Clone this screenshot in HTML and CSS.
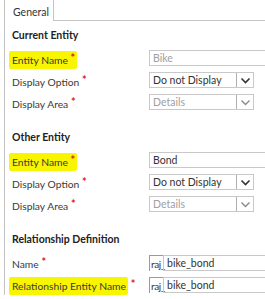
FILE: index.html
```html
<!DOCTYPE html>
<html>
<head>
<meta charset="utf-8">
<link rel="stylesheet" href="styles.css">
</head>
<body>
<div class="tabs">
  <div class="tab">General</div>
  <div class="tab-rest"></div>
</div>
<div class="panel">
  <div class="section-title">Current Entity</div>
  <div class="row first">
    <div class="label"><span class="hl">Entity Name <span class="req">*</span></span></div>
    <div class="field"><div class="input disabled wide">Bike</div></div>
  </div>
  <div class="row">
    <div class="label">Display Option <span class="req">*</span></div>
    <div class="field"><div class="select"><span class="val">Do not Display</span><span class="arrow"><svg width="11" height="7" viewBox="0 0 11 7"><path d="M1.5 1.5 L5.5 5.5 L9.5 1.5" fill="none" stroke="#333" stroke-width="1.6"/></svg></span></div></div>
  </div>
  <div class="row">
    <div class="label">Display Area <span class="req">*</span></div>
    <div class="field"><div class="select disabled"><span class="val">Details</span><span class="arrow"><svg width="11" height="7" viewBox="0 0 11 7"><path d="M1.5 1.5 L5.5 5.5 L9.5 1.5" fill="none" stroke="#8a8a8a" stroke-width="1.4"/></svg></span></div></div>
  </div>

  <div class="section-title second">Other Entity</div>
  <div class="row first">
    <div class="label"><span class="hl">Entity Name <span class="req">*</span></span></div>
    <div class="field"><div class="input wide">Bond</div></div>
  </div>
  <div class="row">
    <div class="label">Display Option <span class="req">*</span></div>
    <div class="field"><div class="select"><span class="val">Do not Display</span><span class="arrow"><svg width="11" height="7" viewBox="0 0 11 7"><path d="M1.5 1.5 L5.5 5.5 L9.5 1.5" fill="none" stroke="#333" stroke-width="1.6"/></svg></span></div></div>
  </div>
  <div class="row">
    <div class="label">Display Area <span class="req">*</span></div>
    <div class="field"><div class="select disabled"><span class="val">Details</span><span class="arrow"><svg width="11" height="7" viewBox="0 0 11 7"><path d="M1.5 1.5 L5.5 5.5 L9.5 1.5" fill="none" stroke="#8a8a8a" stroke-width="1.4"/></svg></span></div></div>
  </div>

  <div class="section-title second">Relationship Definition</div>
  <div class="row first">
    <div class="label">Name <span class="req">*</span></div>
    <div class="field prefixed"><span class="prefix">raj_</span><div class="input wide">bike_bond</div></div>
  </div>
  <div class="row">
    <div class="label"><span class="hl long">Relationship Entity Name</span> <span class="req">*</span></div>
    <div class="field prefixed"><span class="prefix">raj_</span><div class="input wide">bike_bond</div></div>
  </div>
</div>
</body>
</html>
```
FILE: styles.css
```css
html, body {
  margin: 0;
  padding: 0;
  background: #ffffff;
}
body {
  width: 265px;
  height: 299px;
  overflow: hidden;
  font-family: Lato, "Open Sans", sans-serif;
  font-size: 10.5px;
  color: #3a3a3a;
}
.tabs {
  display: flex;
  align-items: flex-end;
  height: 21px;
  margin-left: 4px;
}
.tab {
  width: 50px;
  height: 21px;
  border-left: 1px solid #c4c4c4;
  border-right: 1px solid #c4c4c4;
  box-sizing: border-box;
  padding-left: 8px;
  line-height: 25px;
  font-size: 10.5px;
  color: #333;
}
.tab-rest {
  flex: 1;
  border-bottom: 1px solid #c4c4c4;
}
.panel {
  margin-left: 4px;
  border-left: 1px solid #c4c4c4;
  padding-left: 7px;
  height: 274px;
  box-sizing: border-box;
}
.section-title {
  font-weight: bold;
  color: #222;
  height: 22px;
  line-height: 22px;
  padding-top: 3px;
}
.section-title.second {
  padding-top: 13px;
}
.row {
  display: grid;
  grid-template-columns: 137px 1fr;
  height: 22px;
  align-items: center;
}
.row.first {
  margin-top: 1px;
}
.label {
  white-space: nowrap;
  color: #3a3a3a;
  font-size: 10.3px;
}
.req {
  color: #e8131d;
  font-weight: bold;
  font-size: 11px;
  vertical-align: 2px;
}
.hl {
  background: #f7f500;
  padding: 3px 2px 3px 3px;
  margin-left: -3px;
  border-radius: 2px;
}
.hl.long {
  padding-right: 2px;
}
.field {
  display: flex;
  align-items: center;
}
.input {
  height: 14px;
  border: 1px solid #c9c9c9;
  border-right: none;
  line-height: 14px;
  padding-left: 3px;
  color: #333;
  white-space: nowrap;
  overflow: hidden;
}
.input.wide {
  flex: 1;
}
.input.disabled {
  color: #a0a0a0;
}
.select {
  display: flex;
  width: 103px;
  height: 14px;
  border: 1px solid #c9c9c9;
  line-height: 14px;
  color: #333;
}
.select .val {
  flex: 1;
  padding-left: 3px;
}
.select .arrow {
  width: 16px;
  border-left: 1px solid #b0b0b0;
  display: flex;
  align-items: center;
  justify-content: center;
}
.select.disabled {
  color: #a0a0a0;
}
.prefixed {
  align-items: flex-end;
  height: 17px;
}
.prefixed .prefix {
  height: 16px;
  line-height: 17px;
  border-left: 1px solid #7a9fd6;
  border-top: 1px solid #7a9fd6;
  padding-left: 1px;
  color: #333;
  width: 14px;
  box-sizing: border-box;
  white-space: nowrap;
  letter-spacing: -0.4px;
  font-size: 10px;
}
```
